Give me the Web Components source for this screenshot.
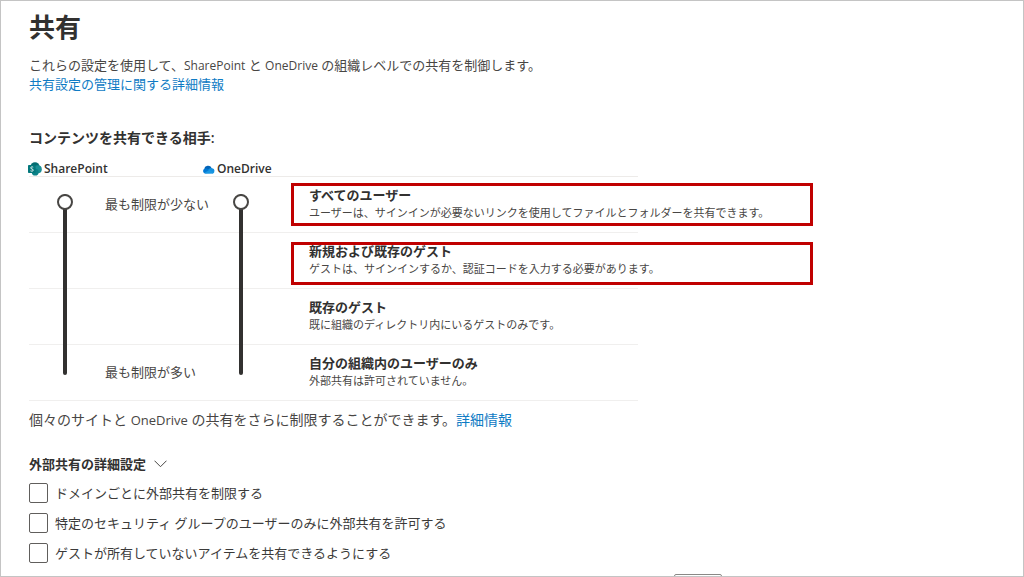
<!DOCTYPE html>
<html lang="ja">
<head>
<meta charset="utf-8">
<title>共有</title>
<style>
  * { box-sizing: border-box; }
  body {
    margin: 0;
    height: 100vh;
    overflow: hidden;
    background: #fff;
    color: #323130;
    font: 13px/19px "Open Sans", "Noto Sans CJK JP", sans-serif;
  }
</style>
</head>
<body>
<sharing-page></sharing-page>

<script>
class ProductLabel extends HTMLElement {
  constructor() {
    super();
    this.attachShadow({ mode: 'open' });
  }

  connectedCallback() {
    const icons = {
      sharepoint: `
        <svg width="14" height="14" viewBox="0 0 14 14" aria-hidden="true">
          <circle cx="7" cy="4.8" r="4.6" fill="#036c70"/>
          <circle cx="9.8" cy="7.2" r="4" fill="#1a8f95"/>
          <circle cx="7.2" cy="10.2" r="3.4" fill="#0b8187"/>
          <rect x="0" y="3" width="7.6" height="8" rx="0.8" fill="#03787c"/>
          <path d="M5.2 5.2C4.7 4.8 2.7 4.6 2.7 5.9c0 1.4 2.6.8 2.6 2.2 0 1.3-2 1.2-2.8.7" fill="none" stroke="#fff" stroke-width="0.9"/>
        </svg>`,
      onedrive: `
        <svg width="12" height="9" viewBox="0 0 12 9" aria-hidden="true">
          <path d="M1.3 4.2A3.8 3.8 0 0 1 8.6 3L6 5.5z" fill="#0364b8"/>
          <path d="M2.5 8.5A2.5 2.5 0 0 1 2.6 3.4c1.3 0 2 .5 3 1.1l4.2 3.8z" fill="#0078d4"/>
          <path d="M5.2 4.7c1.2-2 3-2.1 4-1.5A2.7 2.7 0 0 1 9.4 8.5z" fill="#1490df"/>
          <path d="M1.2 7.9 6.2 5l5.1 2.5c-.4.7-1.1 1-1.9 1H2.5c-.5 0-1-.2-1.3-.6z" fill="#1a98e2"/>
        </svg>`
    };

    this.shadowRoot.innerHTML = `
      <style>
        :host {
          display: flex;
          align-items: center;
          gap: 2px;
          font-size: 12px;
          line-height: 14px;
          font-weight: 600;
        }
        svg { flex: none; }
      </style>
      ${icons[this.getAttribute('icon')]}
      <span><slot></slot></span>
    `;
  }
}

class PermissionSlider extends HTMLElement {
  constructor() {
    super();
    this.attachShadow({ mode: 'open' });
  }

  connectedCallback() {
    this.shadowRoot.innerHTML = `
      <style>
        :host {
          display: flex;
          justify-content: center;
          width: 72px;
          padding: 17px 0 26px;
        }
        input {
          appearance: none;
          -webkit-appearance: none;
          writing-mode: vertical-lr;
          width: 16px;
          height: 100%;
          margin: 0;
          background: none;
        }
        input::-webkit-slider-runnable-track {
          width: 4px;
          height: 100%;
          border-radius: 2px;
          background: #323130;
        }
        input::-webkit-slider-thumb {
          -webkit-appearance: none;
          box-sizing: border-box;
          width: 16px;
          height: 16px;
          margin-left: -6px;
          border: 2px solid #484644;
          border-radius: 50%;
          background: #fff;
        }
      </style>
      <input type="range" min="0" max="3" value="0" aria-label="${this.getAttribute('label')}">
    `;
  }
}

class ShareOption extends HTMLElement {
  constructor() {
    super();
    this.attachShadow({ mode: 'open' });
  }

  connectedCallback() {
    this.shadowRoot.innerHTML = `
      <style>
        :host {
          display: block;
          position: relative;
          padding-top: 9px;
        }
        h3 {
          margin: 0;
          font-size: 13px;
          line-height: 18px;
          font-weight: 600;
        }
        p {
          margin: 0;
          font-size: 11px;
          line-height: 18px;
          color: #484644;
          white-space: nowrap;
        }
        .frame { display: none; }
        :host([marked]) .frame {
          display: block;
          position: absolute;
          box-sizing: border-box;
          top: var(--frame-top, 6px);
          left: -18px;
          right: -175px;
          height: 43px;
          border: 3px solid #c00000;
          pointer-events: none;
        }
      </style>
      <h3><slot name="title"></slot></h3>
      <p><slot></slot></p>
      <div class="frame"></div>
    `;
  }
}

class PermissionGrid extends HTMLElement {
  constructor() {
    super();
    this.attachShadow({ mode: 'open' });
  }

  connectedCallback() {
    this.shadowRoot.innerHTML = `
      <style>
        :host { display: block; max-width: 609px; }
        .products, .levels {
          display: grid;
          grid-template-columns: 76px 100px 104px minmax(0, 1fr);
        }
        product-label { grid-column: 3 / 5; margin-left: -2px; }
        product-label:first-child { grid-column: 1 / 3; margin-left: -1px; }
        .levels {
          grid-template-rows: repeat(4, 56px);
          border-top: 1px solid #edebe9;
        }
        .rule {
          grid-column: 1 / -1;
          border-bottom: 1px solid #f0efee;
        }
        permission-slider { grid-row: 1 / 5; }
        .sp { grid-column: 1; }
        .od { grid-column: 3; }
        .hint {
          grid-column: 2 / 4;
          padding-top: 18px;
          color: #484644;
        }
        share-option { grid-column: 4; }
        .r1 { grid-row: 1; }
        .r2 { grid-row: 2; --frame-top: 9px; }
        .r3 { grid-row: 3; }
        .r4 { grid-row: 4; }
      </style>
      <div class="products">
        <product-label icon="sharepoint">SharePoint</product-label>
        <product-label icon="onedrive">OneDrive</product-label>
      </div>
      <div class="levels">
        <div class="rule r1"></div>
        <div class="rule r2"></div>
        <div class="rule r3"></div>
        <div class="rule r4"></div>
        <span class="hint r1">最も制限が少ない</span>
        <span class="hint r4">最も制限が多い</span>
        <permission-slider class="sp" label="SharePoint"></permission-slider>
        <permission-slider class="od" label="OneDrive"></permission-slider>
        <share-option class="r1" marked><span slot="title">すべてのユーザー</span>ユーザーは、サインインが必要ないリンクを使用してファイルとフォルダーを共有できます。</share-option>
        <share-option class="r2" marked><span slot="title">新規および既存のゲスト</span>ゲストは、サインインするか、認証コードを入力する必要があります。</share-option>
        <share-option class="r3"><span slot="title">既存のゲスト</span>既に組織のディレクトリ内にいるゲストのみです。</share-option>
        <share-option class="r4"><span slot="title">自分の組織内のユーザーのみ</span>外部共有は許可されていません。</share-option>
      </div>
    `;
  }
}

class CheckOption extends HTMLElement {
  constructor() {
    super();
    this.attachShadow({ mode: 'open' });
  }

  connectedCallback() {
    this.shadowRoot.innerHTML = `
      <style>
        :host { display: block; }
        label {
          display: flex;
          align-items: center;
          gap: 7px;
          line-height: 20px;
          color: #3b3a39;
        }
        input {
          appearance: none;
          -webkit-appearance: none;
          box-sizing: border-box;
          flex: none;
          width: 19px;
          height: 20px;
          margin: 0;
          border: 1px solid #605e5c;
          border-radius: 2px;
          background: #fff;
        }
        input:checked { background: #0078d4; }
      </style>
      <label><input type="checkbox"><span><slot></slot></span></label>
    `;
  }
}

class SharingPage extends HTMLElement {
  constructor() {
    super();
    this.attachShadow({ mode: 'open' });
  }

  connectedCallback() {
    this.shadowRoot.innerHTML = `
      <style>
        :host {
          display: block;
          box-sizing: border-box;
          height: 100%;
          overflow: hidden;
          padding: 7px 28px 0;
          border: 1px solid #c4c4c4;
        }
        h1 {
          margin: 0 0 10px;
          font-size: 26px;
          line-height: 38px;
          font-weight: 700;
        }
        h2 {
          margin: 0;
          font-size: 14px;
          line-height: 20px;
          font-weight: 600;
        }
        p { margin: 0; color: #484644; }
        a { color: #0f7bc4; text-decoration: none; }
        a:hover { text-decoration: underline; }
        .latin { font-size: 12px; }
        .people { margin: 34px 0 14px; }
        .note {
          margin-top: 8px;
          font-size: 14px;
          line-height: 22px;
        }
        .note .latin { font-size: 13px; }
        .toggle {
          display: flex;
          align-items: center;
          gap: 8px;
          margin: 23px 0 9px;
          padding: 0;
          border: 0;
          background: none;
          color: inherit;
          font: inherit;
          font-weight: 600;
          line-height: 20px;
        }
        .checks { display: grid; gap: 10px; }
        .more {
          display: block;
          width: 48px;
          height: 24px;
          margin: 11px 0 0 645px;
          border: 1px solid #8a8886;
          border-radius: 2px;
          background: #fff;
        }
      </style>
      <h1>共有</h1>
      <p>これらの設定を使用して、<span class="latin">SharePoint</span> と <span class="latin">OneDrive</span> の組織レベルでの共有を制御します。</p>
      <a href="#">共有設定の管理に関する詳細情報</a>
      <h2 class="people">コンテンツを共有できる相手:</h2>
      <permission-grid></permission-grid>
      <p class="note">個々のサイトと <span class="latin">OneDrive</span> の共有をさらに制限することができます。<a href="#">詳細情報</a></p>
      <button class="toggle" type="button" aria-expanded="true">
        外部共有の詳細設定
        <svg width="13" height="8" viewBox="0 0 13 8" aria-hidden="true">
          <path d="M0.5 0.7 6.5 6.7 12.5 0.7" fill="none" stroke="#484644"/>
        </svg>
      </button>
      <div class="checks">
        <check-option>ドメインごとに外部共有を制限する</check-option>
        <check-option>特定のセキュリティ グループのユーザーのみに外部共有を許可する</check-option>
        <check-option>ゲストが所有していないアイテムを共有できるようにする</check-option>
      </div>
      <button class="more" type="button" aria-label="詳細"></button>
    `;
  }
}

customElements.define('product-label', ProductLabel);
customElements.define('permission-slider', PermissionSlider);
customElements.define('share-option', ShareOption);
customElements.define('permission-grid', PermissionGrid);
customElements.define('check-option', CheckOption);
customElements.define('sharing-page', SharingPage);
</script>
</body>
</html>
